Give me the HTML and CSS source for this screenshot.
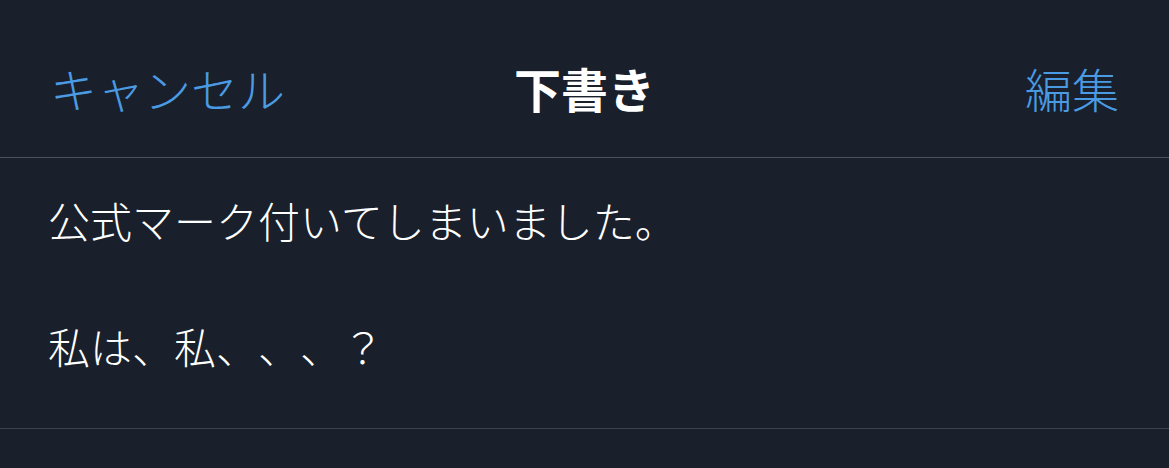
FILE: index.html
```html
<!DOCTYPE html>
<html lang="ja">
<head>
<meta charset="utf-8">
<link rel="stylesheet" href="styles.css">
</head>
<body>
<div class="screen">
  <header class="nav">
    <span class="nav-btn left">キャンセル</span>
    <span class="nav-title">下書き</span>
    <span class="nav-btn right">編集</span>
  </header>
  <section class="draft">
    <p class="line">公式マーク付いてしまいました。</p>
    <p class="line">&nbsp;</p>
    <p class="line">私は、私、、、？</p>
  </section>
</div>
</body>
</html>
```
FILE: styles.css
```css
html, body {
  margin: 0;
  padding: 0;
  background: #19202b;
}
.screen {
  width: 1169px;
  height: 468px;
  background: #19202b;
  font-family: "Noto Sans CJK JP", "Noto Sans", sans-serif;
  text-spacing-trim: space-all;
  font-feature-settings: "halt" 0, "chws" 0, "palt" 0;
  overflow: hidden;
}
.nav {
  height: 158px;
  box-sizing: border-box;
  display: grid;
  grid-template-columns: 1fr auto 1fr;
  align-items: center;
  padding: 18px 50px 0 50px;
  border-bottom: 1px solid #4b515b;
}
.nav-btn {
  color: #4a9be3;
  font-size: 47px;
  font-weight: 300;
  line-height: 1;
}
.nav-btn.right {
  justify-self: end;
}
.nav-title {
  color: #ffffff;
  font-size: 47px;
  font-weight: 700;
  line-height: 1;
}
.draft {
  padding: 30px 48px 0 48px;
  height: 271px;
  box-sizing: border-box;
  border-bottom: 1px solid #3d434d;
}
.line {
  margin: 0;
  color: #ffffff;
  font-size: 42px;
  font-weight: 300;
  line-height: 63px;
  white-space: pre;
}
```
